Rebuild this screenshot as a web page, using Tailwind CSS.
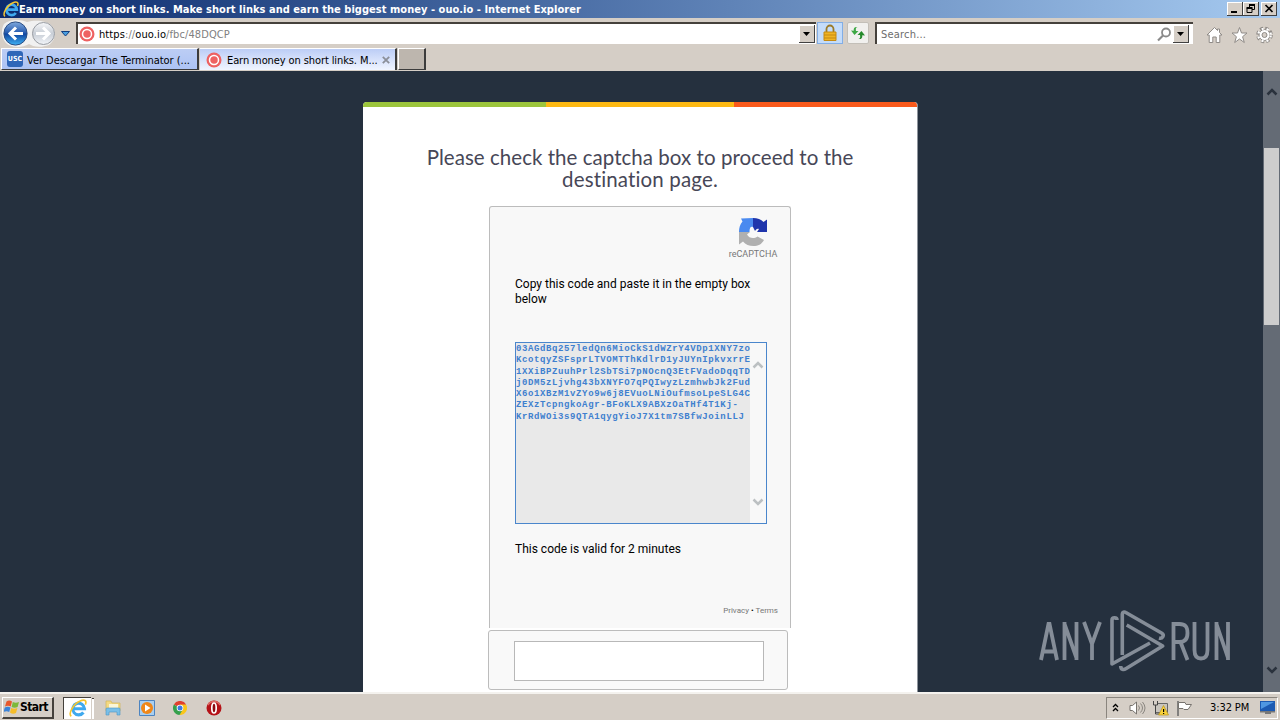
<!DOCTYPE html>
<html lang="en">
<head>
<meta charset="utf-8">
<title>Earn money on short links</title>
<script src="https://cdn.jsdelivr.net/npm/@tailwindcss/browser@4"></script>
</head>
<body class="w-[1280px] h-[720px] overflow-hidden bg-[#d5cec6] flex flex-col text-black font-['DejaVu_Sans_Condensed','DejaVu_Sans',sans-serif] text-[11px] leading-none whitespace-nowrap">

<svg class="hidden">
  <symbol id="ie" viewBox="0 0 16 16">
    <path d="M4.500 8.700h9.300A5.200 5.200 0 1 0 12.800 12" fill="none" stroke="#3fa9ee" stroke-width="2.700"/>
    <path d="M2 15.300C-1 13 4 4.500 9.500 2c4.500-2.200 6.500-.5 5 3" fill="none" stroke="#f4c531" stroke-width="1.500"/>
  </symbol>
  <symbol id="ouo" viewBox="0 0 16 16">
    <circle cx="8" cy="8" r="7.500" fill="#ee6262"/><circle cx="8" cy="8" r="4.500" fill="#ee6262" stroke="#fff" stroke-width="1.500"/>
  </symbol>
</svg>

<!-- title bar -->
<header class="h-[18px] shrink-0 flex items-center bg-linear-to-r from-[#0c2a6d] to-[#a6caf0] pl-[3px] pr-[3px]">
  <svg class="w-4 h-4"><use href="#ie"/></svg>
  <span class="text-white font-bold text-[11px] tracking-[0.03px]">Earn money on short links. Make short links and earn the biggest money - ouo.io - Internet Explorer</span>
  <div class="ml-auto flex h-[14px]">
    <svg class="w-4 h-[14px]" viewBox="0 0 16 14"><path fill="#404040" d="M0 0h16v14H0z"/><path fill="#fff" d="M0 0h15v13H0z"/><path fill="#d5cec6" d="M1 1h14v12H1z"/><path d="M4 9h6v2H4z"/></svg>
    <svg class="w-4 h-[14px]" viewBox="0 0 16 14"><path fill="#404040" d="M0 0h16v14H0z"/><path fill="#fff" d="M0 0h15v13H0z"/><path fill="#d5cec6" d="M1 1h14v12H1z"/><path d="M6.500 5V3h5v4.500H9M4 6.500h5v4H4z" fill="none" stroke="#000"/><path d="M6 2h6v2H6zM3.500 5h6v2h-6z"/></svg>
    <svg class="w-4 h-[14px] ml-0.5" viewBox="0 0 16 14"><path fill="#404040" d="M0 0h16v14H0z"/><path fill="#fff" d="M0 0h15v13H0z"/><path fill="#d5cec6" d="M1 1h14v12H1z"/><path d="m4.500 3 7 7m0-7-7 7" stroke="#000" stroke-width="1.700"/></svg>
  </div>
</header>

<!-- address bar -->
<div class="h-[30px] shrink-0 flex items-start">
  <svg class="w-[76px] h-[30px]" viewBox="0 0 76 30">
    <defs><linearGradient id="b" x2="0" y2="1"><stop stop-color="#7fa9dd"/><stop offset=".48" stop-color="#2459ae"/><stop offset=".52" stop-color="#0f459f"/><stop offset="1" stop-color="#3fb2f5"/></linearGradient>
    <linearGradient id="g" x2="0" y2="1"><stop stop-color="#f7f8fa"/><stop offset=".5" stop-color="#c8ced6"/><stop offset="1" stop-color="#f2f5f9"/></linearGradient></defs>
    <path d="M4 6C9 1 21 1 27 4c8-2 19-2 25 4 6 7 2 19-7 20-7 2-13 0-16-2-7 4-18 4-23-1-5-6-5-14-2-19z" fill="#f1f1f1"/>
    <circle cx="15.500" cy="15.500" r="11.600" fill="url(#b)" stroke="#2c4f85"/>
    <path d="M23 15.500H10m6-6-6 6 6 6" fill="none" stroke="#fff" stroke-width="3"/>
    <circle cx="43.500" cy="15.500" r="11" fill="url(#g)" stroke="#989ca2"/>
    <path d="M36 15.500h13m-6-6 6 6-6 6" fill="none" stroke="#fff" stroke-width="3"/>
    <path d="M61.500 13.500h8L65.500 18z" fill="#4a9fe0" stroke="#123f80"/>
  </svg>
  <div class="mt-[4px] w-[740px] h-[22px] bg-white border-t-2 border-l-2 border-[#45413c] flex items-center">
    <svg class="w-4 h-4 ml-px"><use href="#ouo"/></svg>
    <span class="ml-[4px] text-[#808080] text-[11px] tracking-[0.1px]"><span class="text-black">https</span>://<span class="text-black">ouo.io</span>/fbc/48DQCP</span>
    <svg class="w-4 h-[18px] ml-auto mr-px" viewBox="0 0 16 18"><path fill="#404040" d="M0 0h16v18H0z"/><path fill="#fff" d="M0 0h15v17H0z"/><path fill="#d5cec6" d="M1 1h14v16H1z"/><path d="M4 7h7l-3.500 4z"/></svg>
  </div>
  <div class="ml-px mt-[4px] w-[26px] h-[22px] bg-[#c4dcfa] border border-[#82aee6] flex justify-center items-center">
    <svg class="w-[14px] h-[18px]" viewBox="0 0 14 18"><path d="M3.500 8V5a3.500 3.500 0 0 1 7 0v3" fill="none" stroke="#9b7a28" stroke-width="1.800"/><path d="M1 8h12v8.500H1z" fill="#f0b424" stroke="#c58a12"/><path d="M1 11h12M1 14h12" stroke="#c58a12"/></svg>
  </div>
  <div class="ml-1 mt-[4px] w-[22px] h-[22px] bg-[#f1f0ee] border border-[#c3bfb8] rounded-xs flex justify-center items-center">
    <svg class="w-[16px] h-[14px]" viewBox="0 0 16 14"><path d="M7.500 1C5.500 1.500 5.700 3 6 5h2.500l-4 4L1 4.500l2.700.3C3.500 2 4.500.5 7.500 1z" fill="#3da844"/><path d="M8.500 13c2-.5 1.800-2 1.500-4H7.500l4-4L15 9.500l-2.700-.3c.2 2.800-.8 4.300-3.800 3.800z" fill="#258a2c"/></svg>
  </div>
  <div class="ml-[6px] mt-[4px] w-[318px] h-[22px] bg-white border-t-2 border-l-2 border-[#45413c] flex items-center">
    <span class="ml-[4px] text-[#6d6d6d] tracking-[0.2px]">Search...</span>
    <svg class="w-[15px] h-[15px] ml-auto" viewBox="0 0 15 15"><circle cx="9" cy="5.500" r="4" fill="none" stroke="#8a8a8a" stroke-width="1.800"/><path d="m6 8.500-5 5" stroke="#8a8a8a" stroke-width="2.200"/></svg>
    <svg class="w-4 h-[18px] ml-px mr-[4px]" viewBox="0 0 16 18"><path fill="#404040" d="M0 0h16v18H0z"/><path fill="#fff" d="M0 0h15v17H0z"/><path fill="#d5cec6" d="M1 1h14v16H1z"/><path d="M4 7h7l-3.500 4z"/></svg>
  </div>
  <div class="ml-[13px] mt-[8px] flex gap-2">
    <svg class="w-[17px] h-[18px]" viewBox="0 0 17 18"><path d="M8.500 1.500 1 9h2.200v7.500h3.600V11h3.400v5.500h3.600V9H16l-2.500-2.500V3h-2v1.500z" fill="#fff" stroke="#8f8b87"/></svg>
    <svg class="w-[17px] h-[18px]" viewBox="0 0 17 18"><path d="m8.500 1.500 2 5.500H16l-4.400 3.700 1.700 5.800-4.800-3.500-4.800 3.500 1.700-5.800L1 7h5.500z" fill="#fff" stroke="#8f8b87"/></svg>
    <svg class="w-[17px] h-[18px]" viewBox="0 0 17 18"><circle cx="8.500" cy="9" r="6.500" fill="none" stroke="#8f8b87" stroke-width="3.600" stroke-dasharray="3.100 2"/><circle cx="8.500" cy="9" r="5.500" fill="#fff" stroke="#8f8b87"/><circle cx="8.500" cy="9" r="6.300" fill="none" stroke="#fff" stroke-width="2.200" stroke-dasharray="2 3.100" stroke-dashoffset="-.5"/><circle cx="8.500" cy="9" r="2.500" fill="#d5cec6" stroke="#8f8b87"/></svg>
  </div>
</div>

<!-- tabs -->
<div class="h-[23px] shrink-0 flex items-start">
  <div class="ml-px w-[198px] h-[22px] bg-linear-to-b from-[#bccdf4] to-[#adc3f4] border-t border-l border-b border-b-[#3c3c3c] border-t-white border-l-white border-r-2 border-r-[#3c3c3c] flex items-center pl-[5px]">
    <span class="w-4 h-4 rounded-[3px] bg-[#2f66b8] text-white text-[7px] font-bold flex items-center justify-center">USC</span>
    <span class="ml-[4px] mt-0.5 tracking-[-0.03px]">Ver Descargar The Terminator (...</span>
  </div>
  <div class="ml-px w-[197px] h-[22px] bg-linear-to-b from-[#bccdf6] to-[#f0f5ff] border-t border-white border-r-2 border-r-[#3c3c3c] flex items-center pl-[6px]">
    <svg class="w-4 h-4"><use href="#ouo"/></svg>
    <span class="ml-[5px] mt-0.5 tracking-[-0.1px]">Earn money on short links. M...</span>
    <svg class="w-2 h-2 ml-auto mr-[5px]" viewBox="0 0 8 8"><path d="m.8.8 6.400 6.400m0-6.400L.8 7.200" stroke="#8b8f99" stroke-width="1.800"/></svg>
  </div>
  <div class="ml-px w-[28px] h-[22px] bg-[#bdb6ae] border-t border-l border-t-white border-l-white border-r-2 border-b border-r-[#3c3c3c] border-b-[#3c3c3c]"></div>
</div>

<!-- page -->
<main class="relative h-[621px] shrink-0 flex bg-[#25303e]">
  <section class="ml-[363px] mt-[31px] w-[555px] h-[590px] bg-white rounded-t-[4px] overflow-hidden flex flex-col border-r border-[#8f959d]">
    <div class="h-[5px] shrink-0 flex"><i class="w-[183px] bg-[#9cc53c]"></i><i class="w-[188px] bg-[#fdb913]"></i><i class="flex-1 bg-[#fa5a1c]"></i></div>
    <h1 class="mt-[39px] text-center text-[#474757] font-['Lato',sans-serif] text-[20.5px] leading-[22px]"><span class="tracking-[0.04px]">Please check the captcha box to proceed to the</span><br><span class="tracking-[0.15px]">destination page.</span></h1>
    <div class="ml-[126px] mt-[16px] w-[302px] h-[422px] shrink-0 bg-[#f8f8f8] border border-b-0 border-[#bcbcbc] rounded-t-[3px] font-['Roboto',sans-serif] flex flex-col">
      <div class="self-end mr-[12px] mt-[10px] w-[50px] flex flex-col items-center">
        <svg class="w-[30px] h-[30px]" viewBox="0 0 30 30">
          <path d="M15 1v9c-2.500-1-3.500 1-3.500 5H1C1 11 2 7 4.500 4.500L3 1.500z" fill="#4a8af0"/>
          <path d="M15 1c4.500 0 8 1.500 10.500 4L29 2.500V15H19l2-3c-2-1-3 .5-4 2l-2-4z" fill="#1f35ac"/>
          <path d="M1 15h11l-3 2.500c2 3.500 6.500 5 10.500 2l6.500 3.500C23.500 27.500 20 29 15.500 29c-4.500 0-8-1.500-10.500-4.500l-4 3z" fill="#b0b0b0"/>
        </svg>
        <span class="mt-[3px] text-[9px] leading-[9px] text-[#777]">reCAPTCHA</span>
      </div>
      <p class="ml-[25px] mt-[18px] text-[12px] leading-[15px]">Copy this code and paste it in the empty box<br>below</p>
      <div class="ml-[25px] mt-[35px] w-[252px] h-[182px] shrink-0 border border-[#4a86cc] bg-[#e9e9e9] flex">
        <div class="w-[234px] pt-px text-[#3f80cf] font-bold font-['Liberation_Mono',monospace] text-[9px] leading-[11.300px] overflow-hidden"><div class="tracking-[0.610px]">03AGdBq257ledQn6MioCkS1dWZrY4VDp1XNY7zo<br>KcotqyZSFsprLTVOMTThKdlrD1yJUYnIpkvxrrE<br>1XXiBPZuuhPrl2SbTSi7pNOcnQ3EtFVadoDqqTD<br>j0DM5zLjvhg43bXNYFO7qPQIwyzLzmhwbJk2Fud<br>X6o1XBzM1vZYo9w6j8EVuoLNiOufmsoLpeSLG4C<br>ZEXzTcpngkoAgr-BFoKLX9ABXzOaTHf4T1Kj-<br>KrRdWOi3s9QTA1qygYioJ7X1tm7SBfwJoinLLJ</div></div>
        <div class="flex-1 bg-[#f8f8f8] flex flex-col justify-between items-center pt-[18px] pb-[17px]">
          <svg class="w-3 h-[8px]" viewBox="0 0 12 8"><path d="M1.500 6.500 6 2l4.500 4.500" fill="none" stroke="#bcc0c2" stroke-width="2.500"/></svg>
          <svg class="w-3 h-[8px]" viewBox="0 0 12 8"><path d="M1.500 1.500 6 6l4.500-4.500" fill="none" stroke="#bcc0c2" stroke-width="2.500"/></svg>
        </div>
      </div>
      <p class="ml-[25px] mt-[18px] text-[12px] leading-[15px]">This code is valid for 2 minutes</p>
      <p class="self-end mr-[12px] mt-[49px] text-[8px] leading-[10px] text-[#777]">Privacy <span class="text-black">•</span> Terms</p>
    </div>
    <div class="ml-[125px] mt-[2px] w-[300px] h-[60px] shrink-0 bg-[#f9f9f9] border border-[#bcbcbc] rounded-[3px] pl-[25px] pt-[10px]">
      <div class="w-[250px] h-[40px] bg-white border border-[#b8b8b8]"></div>
    </div>
  </section>

  <!-- watermark -->
  <div class="absolute left-[1036px] top-[537px] w-[200px] h-[66px]">
    <svg class="w-[200px] h-[66px]" viewBox="0 0 200 66" fill="none" stroke="#858d98">
      <g stroke-width="3.800">
        <path d="M5 52 12.500 16h1L21 52M7.500 43.500h11.500"/>
        <path d="M28.500 52V14M28.500 16l12 34M40.500 52V14"/>
        <path d="m48 14 8 22 8-22M56 34v18"/>
        <path d="M137.500 52V16h6c7 0 8 4 8 9s-2 9-8 9h-6m7 0 7 18"/>
        <path d="M158.500 14v28c0 6 2 8.500 6.500 8.500s6.500-2.500 6.500-8.500V14"/>
        <path d="M180.500 52V14M180.500 16l11.500 34M192 52V14"/>
      </g>
      <g stroke-width="3.600" stroke-linejoin="round">
        <path d="M81 12c0-3-5-3-5 0V56l38-21"/>
        <path d="M86.300 47V6c0-2 2-2.500 3.500-1.500L125.500 25c3.500 2 1 6-2.500 5"/>
        <path d="M84.700 58c0 4 3 4 5.500 2.500L126.700 38 90.700 17"/>
      </g>
    </svg>
  </div>

  <!-- scrollbar -->
  <div class="ml-auto w-[17px] h-[621px] bg-[#646b75] flex flex-col items-center">
    <svg class="w-3 h-2 mt-[17px]" viewBox="0 0 12 8"><path d="M1.500 6.500 6 2l4.500 4.500" fill="none" stroke="#2a323d" stroke-width="2.500"/></svg>
    <div class="mt-[52px] w-[15px] h-[177px] bg-[#cdcdcd]"></div>
    <svg class="w-3 h-2 mt-auto mb-[18px]" viewBox="0 0 12 8"><path d="M1.500 1.500 6 6l4.500-4.500" fill="none" stroke="#2a323d" stroke-width="2.500"/></svg>
  </div>
</main>

<!-- taskbar -->
<footer class="h-[28px] shrink-0 flex items-center bg-[#d5cec6] border-t-2 border-[#f4f2ee] pt-px">
  <div class="ml-[2px] w-[52px] h-[22px] border border-t-white border-l-white border-r-2 border-b-2 border-r-[#45413c] border-b-[#45413c] flex items-center pl-px">
    <svg class="w-[16px] h-[16px]" viewBox="0 0 16 16"><path d="M2.500 2.500C4.500 1 6.500 1.500 8 2.500L6.700 7.500C5 6.500 3 6.500 1 7.500z" fill="#e8582c"/><path d="M8.800 3c2 1 4 1 6.200 0l-1.400 5c-2 1-4 1-6 0z" fill="#7db93a"/><path d="M.8 8.500c2-1 4-1 5.700 0L5.200 13C3.500 12 1.500 12-.5 13z" fill="#3b83d8"/><path d="M7.200 9c2 1 4 1 6.200 0L12 14c-2 1-4 1-6-.5z" fill="#f5bd2a"/></svg>
    <span class="font-bold text-[12px] tracking-[-0.6px]">Start</span>
  </div>
  <div class="ml-[9px] w-[28px] h-[22px] bg-white border-t border-l border-[#45413c] flex items-center justify-center relative">
    <svg class="w-[18px] h-[18px]"><use href="#ie"/></svg>
    <i class="absolute right-[-3px] top-0 w-[2px] h-[21px] bg-white border-t border-[#45413c]"></i>
  </div>
  <svg class="ml-[14px] w-[16px] h-[16px]" viewBox="0 0 16 16"><path d="M1 1h5l1 2h8v8H1z" fill="#f3d983" stroke="#d2b458" stroke-width=".7"/><path d="M4 4h9v4H4z" fill="#fbf6d8"/><path d="M1 15V9q0-1 1-1h12q1 0 1 1v6h-3v-3H4v3z" fill="#79bfe8" stroke="#4a94c4" stroke-width=".6"/></svg>
  <svg class="ml-[18px] w-[16px] h-[16px]" viewBox="0 0 16 16"><path d="M.5.5h15v15H.5z" fill="#a9cff0" stroke="#4d84c0"/><circle cx="8" cy="8" r="6" fill="#f08718"/><path d="m6 4.500 5.500 3.500L6 11.500z" fill="#fff"/></svg>
  <svg class="ml-[18px] w-[14px] h-[14px]" viewBox="0 0 14 14"><path d="M7 7 .9 3.500A7 7 0 0 1 13.100 3.500z" fill="#e0402f"/><path d="M13.100 3.500A7 7 0 0 1 6.500 14L9.500 7 7 3.500z" fill="#fac61a"/><path d="M.9 3.500A7 7 0 0 0 6.500 14l3-5z" fill="#35a04c"/><circle cx="7" cy="7" r="3.300" fill="#fff"/><circle cx="7" cy="7" r="2.500" fill="#3e7be0"/></svg>
  <svg class="ml-[19px] w-[16px] h-[16px]" viewBox="0 0 16 16"><circle cx="8" cy="8" r="7.500" fill="#b51218"/><path d="M2 5a7 7 0 0 1 12 0" stroke="#dd6c66" stroke-width="1.500" fill="none"/><ellipse cx="8" cy="8" rx="2.200" ry="5" fill="#8c0b10" stroke="#fff" stroke-width="1.700"/></svg>
  <div class="ml-auto mr-[2px] w-[172px] h-[22px] border-t border-l border-t-[#8a857e] border-l-[#8a857e] border-r border-b border-r-white border-b-white flex items-center">
    <svg class="ml-[5px] w-[7px] h-[9px]" viewBox="0 0 7 9"><path d="m1 4 2.500-2.500L6 4M1 8l2.500-2.500L6 8" fill="none" stroke="#000" stroke-width="1.300"/></svg>
    <svg class="ml-[10px] w-[17px] h-[14px]" viewBox="0 0 17 14"><path d="M1 4.500h2.500L7.500 1v12L3.500 9.500H1z" fill="#fff" stroke="#77736e"/><path d="M9.500 4.500q2 2.500 0 5M11.500 2.500q4 4.500 0 9M13.500 1q5 6 0 12" fill="none" stroke="#8a8680"/></svg>
    <svg class="ml-[6px] w-[17px] h-[16px]" viewBox="0 0 17 16"><path d="M6 3.500h9.500v9H3.500v-6" fill="#c9c5be" stroke="#666"/><path d="M1.500 1v4h4V1M3.500 5v9h5" fill="none" stroke="#444"/><path d="m11.500 5.500 5 9.500h-10z" fill="#f9d13a" stroke="#b79218" stroke-width=".7"/><path d="M11 9h1.200v3H11zm0 4h1.200v1H11z"/></svg>
    <svg class="ml-[7px] w-[17px] h-[16px]" viewBox="0 0 17 16"><path d="M2 1v15" stroke="#666" stroke-width="1.500"/><path d="M2.500 2.500H9l1 2h5.500L12 9.500H8l-1-1H2.500z" fill="#fff" stroke="#77736e"/></svg>
    <span class="ml-[17px] tracking-[-0.1px]">3:32 PM</span>
    <svg class="ml-auto mr-[2px] w-[15px] h-[13px]" viewBox="0 0 15 13"><path d="M0 0h15v10H0z" fill="#1c5ab2"/><path d="M1 1h13L1 8z" fill="#4f97e2"/><path d="M0 10h15v1.500H0zM5 11h6v2H5z" fill="#777"/></svg>
  </div>
</footer>
</body>
</html>
